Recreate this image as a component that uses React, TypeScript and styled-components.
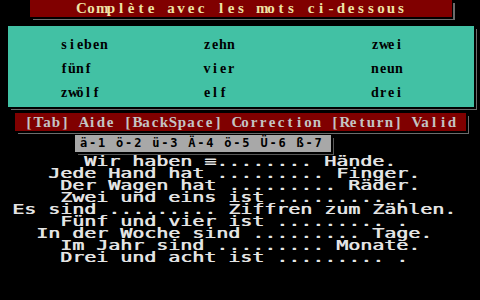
import React from 'react'
import styled, { createGlobalStyle } from 'styled-components'

const GlobalStyle = createGlobalStyle`
    html, body {
        margin: 0;
        padding: 0;
        background: #000;
    }
    #root {
        width: 480px;
        height: 300px;
        overflow: hidden;
    }
`

const WORDS = [
    ['sieben', 'zehn', 'zwei'],
    ['fünf', 'vier', 'neun'],
    ['zwölf', 'elf', 'drei']
]

const SENTENCES = [
    'Wir haben ≡........ Hände.',
    'Jede Hand hat ......... Finger.',
    'Der Wagen hat ......... Räder.',
    'Zwei und eins ist ......... .',
    'Es sind ......... Ziffren zum Zählen.',
    'Fünf und vier ist ......... .',
    'In der Woche sind ......... Tage.',
    'Im Jahr sind ......... Monate.',
    'Drei und acht ist ......... .'
]

const KEYS = ['ä-1', 'ö-2', 'ü-3', 'Ä-4', 'ö-5', 'Ü-6', 'ß-7']

// 40 columns of 12px, like the text mode screen
const COLUMNS = 40

const Screen = styled.div({
    width: 480,
    height: 300,
    background: '#000',
    display: 'flex',
    flexDirection: 'column',
    alignItems: 'flex-start'
})

// one fixed cell per letter, so a serif font sits on a text-mode grid
const Cell = styled.span<{ $w: number }>(({ $w }) => ({
    display: 'inline-block',
    width: $w,
    textAlign: 'center',
    whiteSpace: 'pre'
}))

const Grid: React.FC<{ text: string, w: number }> = ({ text, w }) => (
    <>
        {Array.from(text).map((c, i) =>
            <Cell key={i} $w={w}>{c}</Cell>
        )}
    </>
)

const TitleBar = styled.div({
    marginLeft: 30,
    width: 422,
    height: 17,
    background: '#800000',
    boxShadow: '1px 2px 0 #000, 3px 3px 0 #6c6c6c',
    color: '#eee2a4',
    fontFamily: '"Liberation Serif", serif',
    fontWeight: 700,
    fontSize: 15,
    lineHeight: '17px',
    display: 'flex',
    justifyContent: 'center'
})

const WordPanel = styled.div({
    marginTop: 9,
    marginLeft: 8,
    width: 466,
    height: 81,
    boxSizing: 'border-box',
    paddingTop: 7,
    paddingLeft: 52,
    background: '#42c1a4',
    boxShadow: '2px 2px 0 #000, 3px 3px 0 #6c6c6c',
    display: 'grid',
    gridTemplateColumns: '143px 168px 1fr',
    gridAutoRows: 24
})

const Word = styled.span({
    color: '#000',
    fontFamily: '"Liberation Serif", serif',
    fontWeight: 700,
    fontSize: 14,
    lineHeight: '24px'
})

const HelpBar = styled.div({
    marginTop: 6,
    marginLeft: 15,
    width: 451,
    height: 18,
    background: '#800000',
    boxShadow: '2px 2px 0 #000, 3px 3px 0 #6c6c6c',
    color: '#c4c4c4',
    fontFamily: '"Liberation Serif", serif',
    fontWeight: 700,
    fontSize: 15,
    lineHeight: '18px',
    display: 'flex',
    justifyContent: 'center'
})

const KeyBar = styled.div({
    marginTop: 4,
    marginLeft: 75,
    width: 256,
    height: 17,
    boxSizing: 'border-box',
    paddingLeft: 5,
    background: '#a8a8a8',
    boxShadow: '2px 2px 0 #000, 3px 3px 0 #585858',
    display: 'flex',
    gap: 9
})

const Key = styled.span({
    color: '#000',
    fontFamily: '"DejaVu Sans Mono", monospace',
    fontWeight: 700,
    fontSize: 12,
    lineHeight: '17px',
    letterSpacing: 1.8,
    whiteSpace: 'pre'
})

const Sentences = styled.div({
    marginTop: 3,
    width: 480
})

// wide text-mode letters: a mono font stretched to 12px per column
const Sentence = styled.div({
    height: 12,
    color: '#e4e4e4',
    fontFamily: '"DejaVu Sans Mono", monospace',
    fontSize: 14,
    lineHeight: '12px',
    whiteSpace: 'pre',
    textShadow: '0.6px 0 0 #e4e4e4',
    transform: 'scaleX(1.4236)',
    transformOrigin: '0 0'
})

const centered = (s: string) => ' '.repeat(Math.floor((COLUMNS - s.length) / 2)) + s

const App: React.FC = () => {
    return (
        <Screen>
            <GlobalStyle />
            <TitleBar>
                <Grid text='Complète avec les mots ci-dessous' w={10} />
            </TitleBar>
            <WordPanel>
                {WORDS.flat().map((w, i) =>
                    <Word key={i}><Grid text={w} w={8} /></Word>
                )}
            </WordPanel>
            <HelpBar>
                <Grid text='[Tab] Aide [BackSpace] Correction [Return] Valid' w={9} />
            </HelpBar>
            <KeyBar>
                {KEYS.map(k =>
                    <Key key={k}>{k}</Key>
                )}
            </KeyBar>
            <Sentences>
                {SENTENCES.map((s, i) =>
                    <Sentence key={i}>{centered(s)}</Sentence>
                )}
            </Sentences>
        </Screen>
    )
}

export default App
